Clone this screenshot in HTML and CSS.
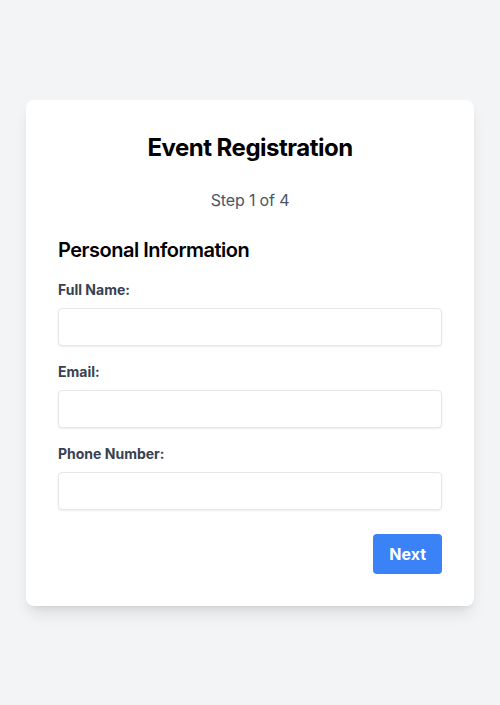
FILE: index.html
```html
<!DOCTYPE html>
<html lang="en">
<head>
<meta charset="utf-8">
<title>Event Registration</title>
<link rel="stylesheet" href="styles.css">
</head>
<body>
<main class="page">
  <form class="card">
    <h1 class="title">Event Registration</h1>
    <p class="step">Step 1 of 4</p>
    <h2 class="section">Personal Information</h2>
    <div class="field">
      <label class="label" for="name">Full Name:</label>
      <input class="input" id="name" type="text" autofocus>
    </div>
    <div class="field">
      <label class="label" for="email">Email:</label>
      <input class="input" id="email" type="email">
    </div>
    <div class="field">
      <label class="label" for="phone">Phone Number:</label>
      <input class="input" id="phone" type="tel">
    </div>
    <div class="actions">
      <button class="btn" type="button">Next</button>
    </div>
  </form>
</main>
</body>
</html>
```
FILE: styles.css
```css
* { box-sizing: border-box; }
html, body { margin: 0; padding: 0; }
body {
  background: #f3f4f6;
  font-family: Inter, "Liberation Sans", sans-serif;
  color: #000;
}
.page {
  min-height: 705px;
  display: flex;
  align-items: center;
  justify-content: center;
}
.card {
  width: 448px;
  background: #fff;
  border-radius: 8px;
  padding: 32px;
  box-shadow: 0 10px 15px -3px rgba(0,0,0,0.1), 0 4px 6px -4px rgba(0,0,0,0.1);
  display: flex;
  flex-direction: column;
}
.title {
  margin: 0 0 24px;
  font-size: 24px;
  line-height: 32px;
  font-weight: 700;
  letter-spacing: -0.5px;
  text-align: center;
}
.step {
  margin: 0 0 24px;
  font-size: 16px;
  line-height: 24px;
  color: #4b5563;
  letter-spacing: -0.15px;
  text-align: center;
}
.section {
  margin: 0 0 16px;
  font-size: 20px;
  line-height: 28px;
  font-weight: 600;
  letter-spacing: -0.5px;
}
.field {
  display: flex;
  flex-direction: column;
  margin-bottom: 16px;
}
.label {
  font-size: 14px;
  line-height: 20px;
  font-weight: 700;
  color: #374151;
  margin-bottom: 8px;
}
.input {
  height: 38px;
  width: 100%;
  border: 1px solid #e5e7eb;
  border-radius: 4px;
  padding: 8px 12px;
  font-family: inherit;
  font-size: 16px;
  color: #374151;
  background: #fff;
  box-shadow: 0 1px 2px 0 rgba(0,0,0,0.08);
  outline: none;
  caret-color: #111827;
}
.actions {
  display: flex;
  justify-content: flex-end;
  margin-top: 8px;
}
.btn {
  height: 40px;
  padding: 0 16px;
  background: #3b82f6;
  color: #fff;
  border: none;
  border-radius: 4px;
  font-family: inherit;
  font-size: 16px;
  line-height: 24px;
  font-weight: 700;
  cursor: pointer;
}
```
